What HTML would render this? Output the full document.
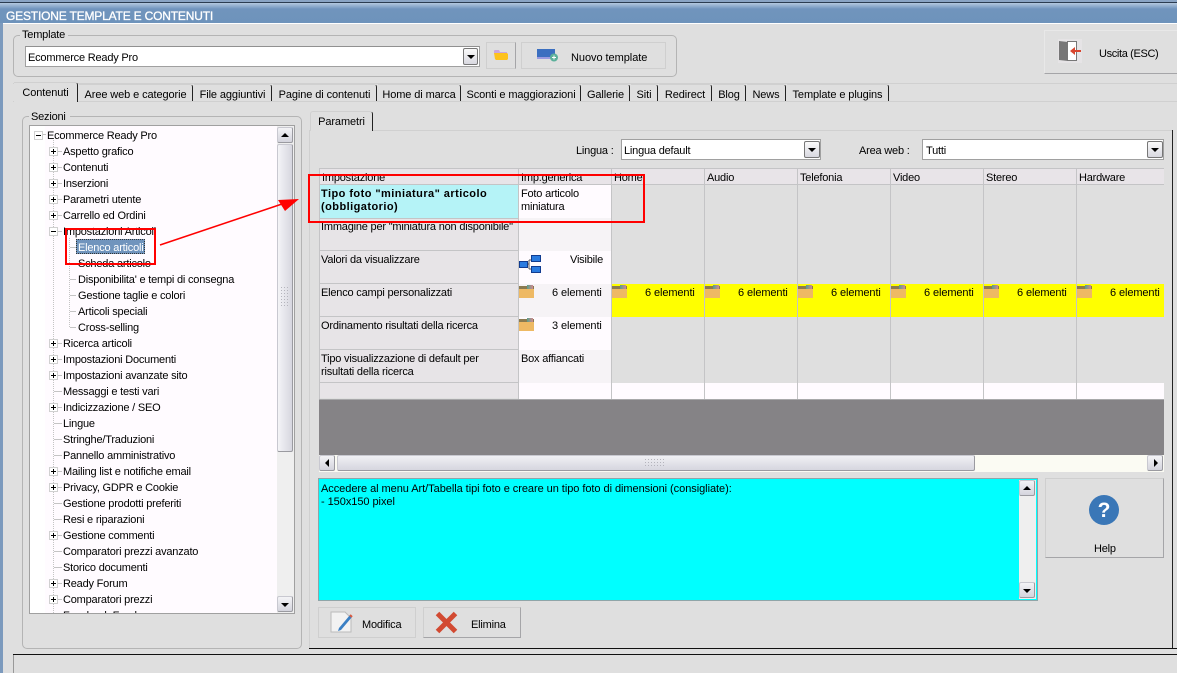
<!DOCTYPE html>
<html><head><meta charset="utf-8"><style>
html,body{margin:0;padding:0;width:1177px;height:673px;overflow:hidden;background:#dfdfdf}
body{position:relative;font:11px/13px "Liberation Sans",sans-serif;color:#000;letter-spacing:-.2px}
.a,.t{position:absolute}
.t{white-space:nowrap;margin-top:1px}
.tab{position:absolute;top:84px;height:17px;border-top:1px solid #d0d0d0;border-right:1px solid #222;border-radius:0 3px 0 0;text-align:center;line-height:20px;white-space:nowrap;box-sizing:border-box;letter-spacing:-.1px}
.btn{position:absolute;background:#dfdfdf;border:1px solid #cfcfcf;box-sizing:border-box}
.sb{position:absolute;width:16px;height:16px;box-sizing:border-box;border:1px solid;border-color:#c8c8d0 #9a9aa0 #9a9aa0 #c8c8d0;border-radius:2px;background:linear-gradient(#f3f3f6,#d4d4dd)}
.up:after,.dn:after,.lf:after,.rt:after{content:"";position:absolute;width:0;height:0}
.up:after{left:3px;top:5px;border:4px solid transparent;border-top:0;border-bottom:4px solid #000}
.dn:after{left:3px;top:6px;border:4px solid transparent;border-bottom:0;border-top:4px solid #000}
.lf:after{left:5px;top:3px;border:4px solid transparent;border-left:0;border-right:4px solid #000}
.rt:after{left:6px;top:3px;border:4px solid transparent;border-right:0;border-left:4px solid #000}
.plus{position:absolute;left:50px;width:7px;height:7px;background:#fff;outline:1px solid #d0d0d0}
.plus:before{content:"";position:absolute;left:1px;top:3px;width:5px;height:1px;background:#000}
.plus.p:after{content:"";position:absolute;left:3px;top:1px;width:1px;height:5px;background:#000}
.h{position:absolute;top:169px;height:15px;background:#e8e4e8;line-height:18px;padding-left:2px;box-sizing:border-box;overflow:hidden}
.l{position:absolute;left:320px;width:198px;background:#e7e4e7;padding:3px 1px;box-sizing:border-box;white-space:nowrap;overflow:hidden}
.v{position:absolute;width:1px;top:169px;height:230px;background:#c4c4c6}
.y{position:absolute;top:284px;height:33px;background:#ff0;width:92px}
.e{position:absolute;top:287px;white-space:nowrap;letter-spacing:-.1px}
.f{position:absolute;width:15px;height:9px;background:#eeb964;border-top:3px solid #8a7a50;box-sizing:content-box}
.f:after{content:"";position:absolute;right:1px;top:-4px;width:6px;height:4px;background:linear-gradient(90deg,#5b9e8a,#d08a90)}
</style></head><body>
<!-- title bar -->
<div class="a" style="left:0;top:0;width:1177px;height:2px;background:#8aa4c4"></div>
<div class="a" style="left:0;top:2px;width:1177px;height:1px;background:#2c3c50"></div>
<div class="a" style="left:0;top:3px;width:1177px;height:20px;background:linear-gradient(#b4c8df,#7094bd 30%,#6e93bb)"></div>
<div class="a" style="left:3px;top:23px;width:1174px;height:1px;background:#fff"></div>
<div class="a" style="left:0;top:23px;width:3px;height:650px;background:#7c9abd"></div>
<div class="t" style="left:6px;top:9px;color:#fff;font-size:12px;letter-spacing:-.18px;-webkit-text-stroke:.3px #fff">GESTIONE TEMPLATE E CONTENUTI</div>

<!-- template group -->
<div class="a" style="left:13px;top:35px;width:662px;height:40px;border:1px solid #b4b4b4;border-radius:5px"></div>
<div class="t" style="left:20px;top:28px;background:#dfdfdf;padding:0 3px 0 2px">Template</div>
<div class="a" style="left:25px;top:46px;width:455px;height:21px;background:#fff;border:1px solid #a0a0a0;box-sizing:border-box;border-top-color:#909090"></div>
<div class="t" style="left:28px;top:51px">Ecommerce Ready Pro</div>
<div class="sb dn" style="left:463px;top:48px;width:15px;height:17px;background:linear-gradient(#fafafa,#d8d8e0);border-color:#777"></div>
<div class="btn" style="left:486px;top:42px;width:30px;height:27px;border-right-color:#a5a5a8"></div>
<svg class="a" style="left:493px;top:49px" width="16" height="12"><path d="M1 2q0-1 1-1h4l1 2h7v1H1z" fill="#c9a6e0"/><path d="M1 4h13l1 1v5l-1 1H3l-1-1z" fill="#fdc21e"/></svg>
<div class="btn" style="left:521px;top:42px;width:145px;height:27px"></div>
<svg class="a" style="left:536px;top:48px" width="24" height="14"><rect x="1" y="1" width="18" height="8" fill="#3b6fc0"/><rect x="1" y="9" width="18" height="2" fill="#9b9be0"/><circle cx="18" cy="9.500" r="4" fill="#5cb09a"/><path d="M16 9.500h4M18 7.500v4" stroke="#fff"/></svg>
<div class="t" style="left:571px;top:51px;letter-spacing:-.05px">Nuovo template</div>

<!-- exit -->
<div class="btn" style="left:1044px;top:30px;width:140px;height:44px;border-color:#e8e8e8 #a5a5a8 #a5a5a8 #e8e8e8"></div>
<svg class="a" style="left:1058px;top:39px" width="24" height="24"><rect x="0" y="0" width="24" height="24" fill="#e6e4e6"/><rect x="9.500" y="2.500" width="9" height="19" fill="#fff" stroke="#777"/><path d="M1 2l9 1v19l-9-1z" fill="#777"/><path d="M12 12l5-4v3h6v2h-6v3z" fill="#d8452e"/></svg>
<div class="t" style="left:1099px;top:47px;letter-spacing:-.35px">Uscita (ESC)</div>

<!-- tabs -->
<div class="a" style="left:13px;top:83px;width:1164px;height:1px;background:#d0d0d0"></div>
<div class="a" style="left:13px;top:101px;width:1164px;height:1px;background:#d0d0d0"></div>
<div class="tab" style="left:14px;width:64px;top:82px;height:20px;background:#dfdfdf;line-height:21px">Contenuti</div>
<div class="tab" style="left:79px;width:114px">Aree web e categorie</div>
<div class="tab" style="left:194px;width:78px">File aggiuntivi</div>
<div class="tab" style="left:273px;width:104px">Pagine di contenuti</div>
<div class="tab" style="left:378px;width:83px">Home di marca</div>
<div class="tab" style="left:462px;width:119px">Sconti e maggiorazioni</div>
<div class="tab" style="left:582px;width:48px">Gallerie</div>
<div class="tab" style="left:631px;width:27px">Siti</div>
<div class="tab" style="left:659px;width:53px">Redirect</div>
<div class="tab" style="left:713px;width:33px">Blog</div>
<div class="tab" style="left:747px;width:39px">News</div>
<div class="tab" style="left:787px;width:102px">Template e plugins</div>

<!-- sezioni -->
<div class="a" style="left:22px;top:116px;width:280px;height:533px;border:1px solid #b4b4b4;border-radius:5px;box-sizing:border-box"></div>
<div class="t" style="left:29px;top:110px;background:#dfdfdf;padding:0 4px 0 2px">Sezioni</div>
<div class="a" style="left:29px;top:125px;width:266px;height:489px;background:#fffbff;border:1px solid #a0a0a0;box-sizing:border-box;overflow:hidden"></div>
<div class="a" style="left:30px;top:126px;width:15px;height:487px;background:#fff"></div>
<div class="a" style="left:53px;top:140px;width:1px;height:473px;border-left:1px dotted #c4c4c4"></div>
<div class="a" style="left:69px;top:238px;height:89px;width:1px;border-left:1px dotted #c4c4c4"></div>
<div class="a" style="left:42px;top:134px;width:4px;height:1px;background:#c4c4c4"></div>
<div class="a" style="left:54px;top:136px;width:8px;height:96px;background:repeating-linear-gradient(to bottom,transparent 0 15px,#c4c4c4 15px 16px)"></div>
<div class="a" style="left:54px;top:328px;width:8px;height:285px;background:repeating-linear-gradient(to bottom,transparent 0 15px,#c4c4c4 15px 16px)"></div>
<div class="a" style="left:70px;top:232px;width:6px;height:96px;background:repeating-linear-gradient(to bottom,transparent 0 15px,#c4c4c4 15px 16px)"></div>
<div class="plus" style="left:35px;top:132px"></div>
<div class="t" style="left:47px;top:129px">Ecommerce Ready Pro</div>
<div class="plus p" style="top:148px"></div><div class="t" style="left:63px;top:145px">Aspetto grafico</div>
<div class="plus p" style="top:164px"></div><div class="t" style="left:63px;top:161px">Contenuti</div>
<div class="plus p" style="top:180px"></div><div class="t" style="left:63px;top:177px">Inserzioni</div>
<div class="plus p" style="top:196px"></div><div class="t" style="left:63px;top:193px">Parametri utente</div>
<div class="plus p" style="top:212px"></div><div class="t" style="left:63px;top:209px">Carrello ed Ordini</div>
<div class="plus" style="top:228px"></div><div class="t" style="left:63px;top:225px">Impostazioni Articoli</div>
<div class="a" style="left:76px;top:239px;width:69px;height:15px;background:#7094bd;outline:1px dotted #333;outline-offset:-1px"></div>
<div class="t" style="left:78px;top:241px;color:#fff">Elenco articoli</div>
<div class="t" style="left:78px;top:257px">Scheda articolo</div>
<div class="t" style="left:78px;top:273px">Disponibilita' e tempi di consegna</div>
<div class="t" style="left:78px;top:289px">Gestione taglie e colori</div>
<div class="t" style="left:78px;top:305px">Articoli speciali</div>
<div class="t" style="left:78px;top:321px">Cross-selling</div>
<div class="plus p" style="top:340px"></div><div class="t" style="left:63px;top:337px">Ricerca articoli</div>
<div class="plus p" style="top:356px"></div><div class="t" style="left:63px;top:353px">Impostazioni Documenti</div>
<div class="plus p" style="top:372px"></div><div class="t" style="left:63px;top:369px">Impostazioni avanzate sito</div>
<div class="t" style="left:63px;top:385px">Messaggi e testi vari</div>
<div class="plus p" style="top:404px"></div><div class="t" style="left:63px;top:401px">Indicizzazione / SEO</div>
<div class="t" style="left:63px;top:417px">Lingue</div>
<div class="t" style="left:63px;top:433px">Stringhe/Traduzioni</div>
<div class="t" style="left:63px;top:449px">Pannello amministrativo</div>
<div class="plus p" style="top:468px"></div><div class="t" style="left:63px;top:465px">Mailing list e notifiche email</div>
<div class="plus p" style="top:484px"></div><div class="t" style="left:63px;top:481px">Privacy, GDPR e Cookie</div>
<div class="t" style="left:63px;top:497px">Gestione prodotti preferiti</div>
<div class="t" style="left:63px;top:513px">Resi e riparazioni</div>
<div class="plus p" style="top:532px"></div><div class="t" style="left:63px;top:529px">Gestione commenti</div>
<div class="t" style="left:63px;top:545px">Comparatori prezzi avanzato</div>
<div class="t" style="left:63px;top:561px">Storico documenti</div>
<div class="plus p" style="top:580px"></div><div class="t" style="left:63px;top:577px">Ready Forum</div>
<div class="plus p" style="top:596px"></div><div class="t" style="left:63px;top:593px">Comparatori prezzi</div>
<div class="a" style="left:63px;top:608px;height:5px;overflow:hidden;width:100px"><div class="t" style="left:0;top:1px">Facebook Feed</div></div>
<!-- tree scrollbar -->
<div class="a" style="left:277px;top:126px;width:17px;height:487px;background:#efefef"></div>
<div class="sb up" style="left:277px;top:127px"></div>
<div class="a" style="left:277px;top:144px;width:16px;height:308px;box-sizing:border-box;border:1px solid;border-color:#c8c8d0 #9a9aa0 #9a9aa0 #c8c8d0;border-radius:2px;background:linear-gradient(90deg,#f4f4f7,#d6d6df)"></div>
<div class="a" style="left:281px;top:287px;width:7px;height:20px;background:repeating-linear-gradient(to bottom,#b4b4bc 0 1px,transparent 1px 3px);-webkit-mask:repeating-linear-gradient(90deg,#000 0 1px,transparent 1px 3px)"></div>
<div class="sb dn" style="left:277px;top:596px"></div>

<!-- right panel -->
<div class="a" style="left:309px;top:130px;width:863px;height:518px;border-top:1px solid #d0d0d0;border-left:1px solid #d0d0d0;box-sizing:border-box"></div>
<div class="a" style="left:1172px;top:130px;width:1px;height:518px;background:#222"></div>
<div class="a" style="left:309px;top:648px;width:868px;height:1px;background:#111"></div>
<div class="a" style="left:13px;top:654px;width:1164px;height:1px;background:#111"></div>
<div class="a" style="left:13px;top:655px;width:1px;height:18px;background:#999"></div>
<div class="tab" style="left:310px;top:111px;width:63px;height:20px;line-height:21px;border-left:1px solid #d0d0d0;background:#dfdfdf;border-radius:3px 3px 0 0">Parametri</div>

<div class="t" style="left:576px;top:144px">Lingua :</div>
<div class="a" style="left:621px;top:139px;width:200px;height:21px;background:#fff;border:1px solid #a0a0a0;box-sizing:border-box"></div>
<div class="t" style="left:624px;top:144px">Lingua default</div>
<div class="sb dn" style="left:804px;top:141px;height:17px;background:linear-gradient(#fafafa,#d8d8e0);border-color:#777"></div>
<div class="t" style="left:859px;top:144px">Area web :</div>
<div class="a" style="left:922px;top:139px;width:242px;height:21px;background:#fff;border:1px solid #a0a0a0;box-sizing:border-box"></div>
<div class="t" style="left:926px;top:144px">Tutti</div>
<div class="sb dn" style="left:1147px;top:141px;height:17px;background:linear-gradient(#fafafa,#d8d8e0);border-color:#777"></div>

<!-- grid -->
<div class="a" style="left:319px;top:168px;width:845px;height:232px;background:#dfdfdf"></div>
<div class="a" style="left:319px;top:168px;width:845px;height:1px;background:#c4c4c6"></div>
<div class="a" style="left:319px;top:169px;width:1px;height:231px;background:#c4c4c6"></div>
<div class="h" style="left:320px;width:198px">Impostazione</div>
<div class="h" style="left:519px;width:92px">Imp.generica</div>
<div class="h" style="left:612px;width:92px">Home</div>
<div class="h" style="left:705px;width:92px">Audio</div>
<div class="h" style="left:798px;width:92px">Telefonia</div>
<div class="h" style="left:891px;width:92px">Video</div>
<div class="h" style="left:984px;width:92px">Stereo</div>
<div class="h" style="left:1077px;width:87px">Hardware</div>
<div class="a" style="left:320px;top:184px;width:844px;height:1px;background:#c4c4c6"></div>

<div class="l" style="top:185px;height:33px;background:#b5f3f7;font-weight:bold;letter-spacing:.45px;padding-top:3px">Tipo foto "miniatura" articolo<br>(obbligatorio)</div>
<div class="l" style="top:219px;height:31px;padding-top:2px">Immagine per "miniatura non disponibile"</div>
<div class="l" style="top:251px;height:32px">Valori da visualizzare</div>
<div class="l" style="top:284px;height:32px">Elenco campi personalizzati</div>
<div class="l" style="top:317px;height:32px">Ordinamento risultati della ricerca</div>
<div class="l" style="top:350px;height:32px">Tipo visualizzazione di default per<br>risultati della ricerca</div>
<div class="l" style="top:383px;height:15px"></div>
<div class="a" style="left:320px;top:218px;width:198px;height:1px;background:#c4c4c6"></div>
<div class="a" style="left:320px;top:250px;width:198px;height:1px;background:#c4c4c6"></div>
<div class="a" style="left:320px;top:283px;width:198px;height:1px;background:#c4c4c6"></div>
<div class="a" style="left:320px;top:316px;width:198px;height:1px;background:#c4c4c6"></div>
<div class="a" style="left:320px;top:349px;width:198px;height:1px;background:#c4c4c6"></div>
<div class="a" style="left:320px;top:382px;width:198px;height:1px;background:#c4c4c6"></div>

<div class="a" style="left:519px;top:185px;width:92px;height:33px;background:#fffbff"></div>
<div class="a" style="left:519px;top:218px;width:92px;height:33px;background:#f6f3f6"></div>
<div class="a" style="left:519px;top:251px;width:92px;height:33px;background:#fffbff"></div>
<div class="a" style="left:519px;top:284px;width:92px;height:33px;background:#f6f3f6"></div>
<div class="a" style="left:519px;top:317px;width:92px;height:33px;background:#fffbff"></div>
<div class="a" style="left:519px;top:350px;width:92px;height:33px;background:#f6f3f6"></div>
<div class="a" style="left:519px;top:383px;width:645px;height:16px;background:#fffbff"></div>
<div class="t" style="left:521px;top:187px">Foto articolo<br>miniatura</div>
<div class="t" style="left:521px;top:352px">Box affiancati</div>
<div class="t" style="left:570px;top:253px">Visibile</div>
<svg class="a" style="left:519px;top:254px" width="24" height="20"><path d="M10 6h4M10 15h4M10 6v9M8 10h2" stroke="#555" fill="none"/><rect x="12.500" y="1.500" width="9" height="6" fill="#2a7be0" stroke="#123c90"/><rect x="12.500" y="12.500" width="9" height="6" fill="#2a7be0" stroke="#123c90"/><rect x="0.500" y="7.500" width="8" height="6" fill="#2a7be0" stroke="#123c90"/></svg>

<div class="y" style="left:612px"></div><div class="y" style="left:705px"></div><div class="y" style="left:798px"></div><div class="y" style="left:891px"></div><div class="y" style="left:984px"></div><div class="y" style="left:1077px;width:87px"></div>
<div class="f" style="left:519px;top:286px"></div><div class="f" style="left:519px;top:319px"></div>
<div class="f" style="left:612px;top:286px"></div><div class="f" style="left:705px;top:286px"></div><div class="f" style="left:798px;top:286px"></div><div class="f" style="left:891px;top:286px"></div><div class="f" style="left:984px;top:286px"></div><div class="f" style="left:1077px;top:286px"></div>
<div class="e" style="left:552px">6 elementi</div>
<div class="e" style="left:552px;top:320px">3 elementi</div>
<div class="e" style="left:645px">6 elementi</div>
<div class="e" style="left:738px">6 elementi</div>
<div class="e" style="left:831px">6 elementi</div>
<div class="e" style="left:924px">6 elementi</div>
<div class="e" style="left:1017px">6 elementi</div>
<div class="e" style="left:1110px">6 elementi</div>
<div class="v" style="left:518px"></div><div class="v" style="left:611px"></div><div class="v" style="left:704px"></div><div class="v" style="left:797px"></div><div class="v" style="left:890px"></div><div class="v" style="left:983px"></div><div class="v" style="left:1076px"></div>

<div class="a" style="left:319px;top:399px;width:845px;height:56px;background:#858386;border-top:1px solid #a8a8aa;box-sizing:border-box"></div>
<!-- h scroll -->
<div class="a" style="left:319px;top:455px;width:845px;height:17px;background:#fbfbf3"></div>
<div class="sb lf" style="left:319px;top:455px"></div>
<div class="a" style="left:337px;top:455px;width:638px;height:16px;box-sizing:border-box;border:1px solid;border-color:#c8c8d0 #9a9aa0 #9a9aa0 #c8c8d0;border-radius:2px;background:linear-gradient(#f0f0f4,#d6d6df)"></div>
<div class="a" style="left:645px;top:459px;width:21px;height:7px;background:repeating-linear-gradient(to bottom,#b4b4bc 0 1px,transparent 1px 3px);-webkit-mask:repeating-linear-gradient(90deg,#000 0 1px,transparent 1px 3px)"></div>
<div class="sb rt" style="left:1147px;top:455px"></div>

<!-- cyan -->
<div class="a" style="left:318px;top:478px;width:720px;height:123px;background:#0ff;border:1px solid #8fa5a8;box-sizing:border-box"></div>
<div class="t" style="left:321px;top:482px;line-height:13px;letter-spacing:-.05px">Accedere al menu Art/Tabella tipi foto e creare un tipo foto di dimensioni (consigliate):<br>- 150x150 pixel</div>
<div class="a" style="left:1019px;top:480px;width:17px;height:119px;background:#efefef"></div>
<div class="sb up" style="left:1019px;top:480px"></div>
<div class="sb dn" style="left:1019px;top:582px"></div>

<!-- help -->
<div class="btn" style="left:1045px;top:478px;width:119px;height:80px;border-color:#cfcfcf #a5a5a8 #a5a5a8 #cfcfcf"></div>
<svg class="a" style="left:1089px;top:495px" width="30" height="30"><circle cx="15" cy="15" r="15" fill="#3a77b7"/><text x="15" y="22" text-anchor="middle" font-family="Liberation Sans" font-weight="bold" font-size="21" fill="#fff">?</text></svg>
<div class="t" style="left:1094px;top:542px">Help</div>

<!-- bottom buttons -->
<div class="btn" style="left:318px;top:607px;width:98px;height:31px"></div>
<svg class="a" style="left:330px;top:611px" width="24" height="22"><path d="M1 1h14l6 6v14H1z" fill="#f2f2f2" stroke="#bbb"/><path d="M9 17L20 4l2 2L11 19l-3 1z" fill="#3a7fc4"/><path d="M20 4l2 2" stroke="#d85a40" stroke-width="2"/></svg>
<div class="t" style="left:362px;top:618px">Modifica</div>
<div class="btn" style="left:423px;top:607px;width:98px;height:31px;border-color:#cfcfcf #a5a5a8 #a5a5a8 #cfcfcf"></div>
<svg class="a" style="left:435px;top:611px" width="23" height="23"><path d="M2.500 2.500L20.500 20.500M20.500 2.500L2.500 20.500" stroke="#d24a32" stroke-width="5"/></svg>
<div class="t" style="left:471px;top:618px">Elimina</div>

<!-- annotations -->
<svg class="a" style="left:0;top:0;pointer-events:none" width="1177" height="673">
<rect x="66" y="229" width="89" height="35" fill="none" stroke="#f00" stroke-width="2"/>
<rect x="309" y="175" width="335" height="47" fill="none" stroke="#f00" stroke-width="2"/>
<path d="M160 245L285 203" stroke="#f00" stroke-width="1.500"/>
<path d="M278 200L299 199L285 211z" fill="#f00"/>
</svg>
</body></html>
